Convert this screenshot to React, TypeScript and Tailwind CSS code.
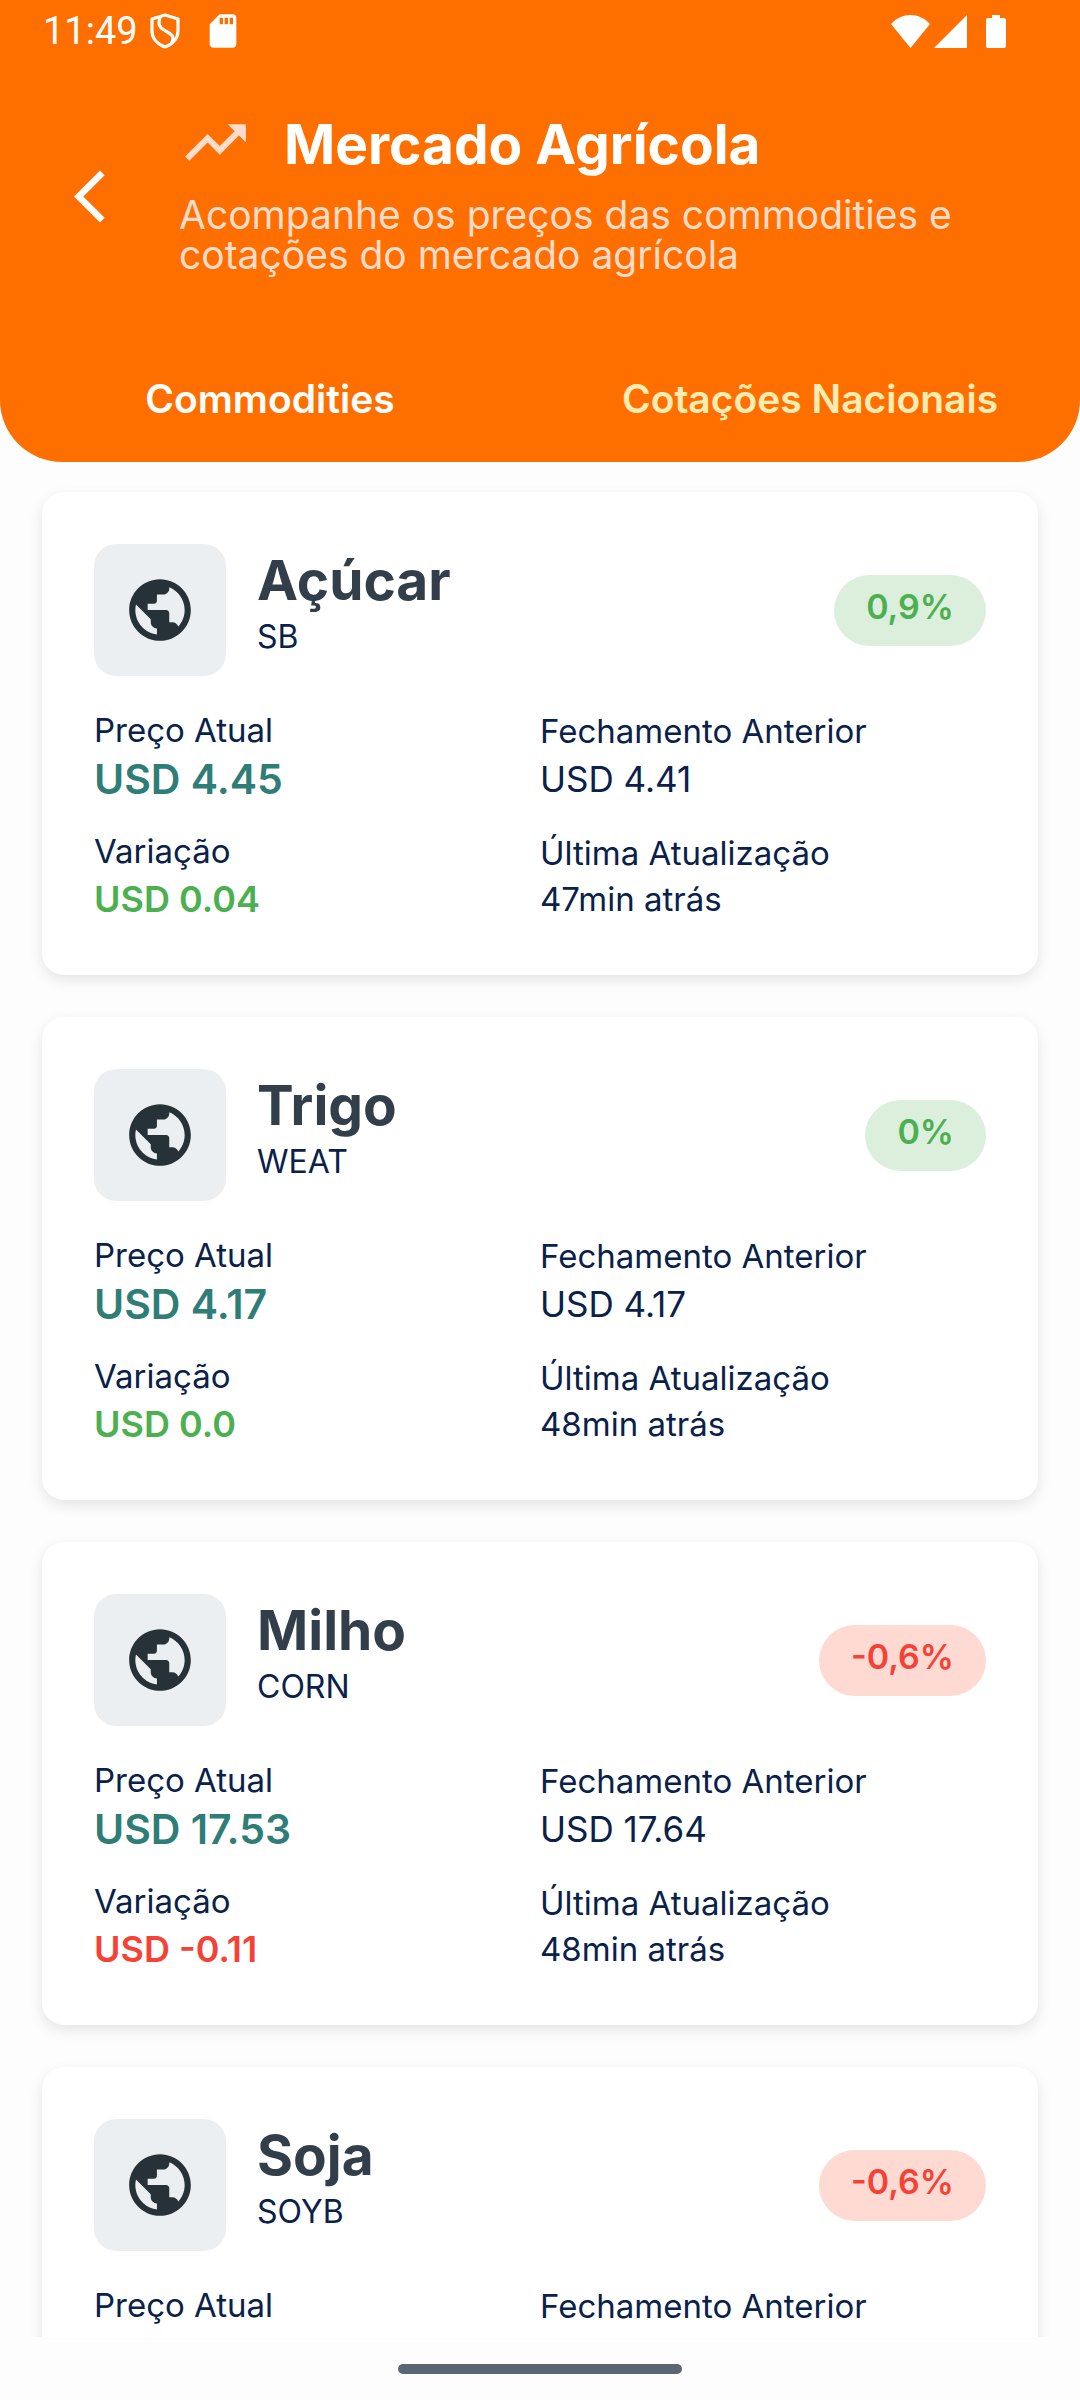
/**
 * App.tsx
 * Agricultural market screen: commodity prices and national quotes.
 */

import React from 'react'
import { MdArrowBackIos, MdPublic, MdSdStorage, MdTrendingUp } from 'react-icons/md'

type Commodity = {
  name: string
  symbol: string
  percent: string
  price: string
  previous: string
  change: string
  updated: string
  down?: boolean
}

const commodities: Commodity[] = [
  { name: 'Açúcar', symbol: 'SB', percent: '0,9%', price: 'USD 4.45', previous: 'USD 4.41', change: 'USD 0.04', updated: '47min atrás' },
  { name: 'Trigo', symbol: 'WEAT', percent: '0%', price: 'USD 4.17', previous: 'USD 4.17', change: 'USD 0.0', updated: '48min atrás' },
  { name: 'Milho', symbol: 'CORN', percent: '-0,6%', price: 'USD 17.53', previous: 'USD 17.64', change: 'USD -0.11', updated: '48min atrás', down: true },
  { name: 'Soja', symbol: 'SOYB', percent: '-0,6%', price: 'USD 22.08', previous: 'USD 22.21', change: 'USD -0.13', updated: '48min atrás', down: true },
]

function StatusBar() {
  return (
    <div className="flex h-[62px] items-center pl-[43px] pr-[74px] text-white">
      <span className="font-[Roboto,sans-serif] text-[38px] leading-[44px]">11:49</span>
      <svg className="ml-3 h-[36px] w-[30px]" viewBox="0 0 30 36" fill="none" stroke="currentColor" strokeWidth="3.200">
        <path d="M15 2 28 6v12c0 7-5 13-13 16C7 31 2 25 2 18V6z" strokeLinejoin="round" />
        <path d="M10 4c-2 7-1 10 4 13 7 4 12 6 7 14" />
      </svg>
      <MdSdStorage className="ml-[23px] size-10" />
      <svg className="ml-auto h-[33px] w-[39px]" viewBox="0 0 39 33" fill="currentColor">
        <path d="M0 9C11-3 28-3 39 9L19.500 33z" />
      </svg>
      <svg className="ml-1 size-[33px]" viewBox="0 0 33 33" fill="currentColor">
        <path d="M33 0v33H0z" />
      </svg>
      <svg className="ml-[19px] h-[33px] w-[20px]" viewBox="0 0 20 33" fill="currentColor">
        <path d="M6 0h8v3h4a2 2 0 0 1 2 2v26a2 2 0 0 1-2 2H2a2 2 0 0 1-2-2V5a2 2 0 0 1 2-2h4z" />
      </svg>
    </div>
  )
}

function Header() {
  return (
    <header className="shrink-0 rounded-b-[62px] bg-[#ff6f00]">
      <StatusBar />
      <div className="mt-11 flex items-center pl-[74px] pr-20">
        <button aria-label="Voltar" className="text-white">
          <MdArrowBackIos className="size-[63px]" />
        </button>
        <div className="ml-[42px] flex-1 pb-3">
          <div className="flex items-end gap-[32px]">
            <MdTrendingUp className="size-[73px] text-[#ffdccc]" />
            <h1 className="text-[55px] font-bold leading-[70px] text-white">Mercado Agrícola</h1>
          </div>
          <p className="mt-4 text-[39px] leading-10 text-[#ffdccc]">
            Acompanhe os preços das commodities e cotações do mercado agrícola
          </p>
        </div>
      </div>
      <nav className="mt-[49px] grid h-[126px] grid-cols-2 text-[39px] font-semibold">
        <button className="text-white">Commodities</button>
        <button className="text-[#ffecb3]">Cotações Nacionais</button>
      </nav>
    </header>
  )
}

function CommodityCard({ item }: { item: Commodity }) {
  return (
    <article className="rounded-[22px] bg-white p-[52px] shadow-[0_5px_14px_rgba(0,0,0,0.10)]">
      <div className="flex items-center">
        <div className="flex size-[132px] items-center justify-center rounded-[22px] bg-[#eceff1]">
          <MdPublic className="size-[74px] text-[#263238]" />
        </div>
        <div className="ml-[31px] flex-1">
          <h2 className="text-[55px] font-bold leading-[54px] text-[#323f4b]">{item.name}</h2>
          <p className="text-[32px] leading-[60px]">{item.symbol}</p>
        </div>
        <span
          className={
            item.down
              ? 'rounded-full bg-[#fedad3] px-8 pb-[15px] pt-2 text-[34px] font-semibold leading-[48px] text-[#f44336]'
              : 'rounded-full bg-[#dbefdc] px-8 pb-[15px] pt-2 text-[34px] font-semibold leading-[48px] text-[#4caf50]'
          }
        >
          {item.percent}
        </span>
      </div>

      <div className="mt-[30px] grid grid-cols-2 items-center gap-y-[23px] text-[33px] leading-[48px]">
        <div>
          <div>Preço Atual</div>
          <div className="text-[41px] font-semibold leading-[50px] text-[#2f7d77]">{item.price}</div>
        </div>
        <div>
          <div>Fechamento Anterior</div>
          <div className="text-[35px] leading-[48px]">{item.previous}</div>
        </div>
        <div>
          <div>Variação</div>
          <div className={item.down ? 'text-[36px] font-semibold leading-[48px] text-[#f44336]' : 'text-[36px] font-semibold leading-[48px] text-[#4caf50]'}>
            {item.change}
          </div>
        </div>
        <div>
          <div>Última Atualização</div>
          <div className="leading-[44px]">{item.updated}</div>
        </div>
      </div>
    </article>
  )
}

export default function App() {
  return (
    <div className="flex h-screen flex-col bg-[#fdfdfd] font-[Inter,sans-serif] text-[#0a2149]">
      <Header />
      <main className="min-h-0 flex-1 space-y-[42px] overflow-y-auto px-[42px] pt-[30px] [scrollbar-width:none]">
        {commodities.map((item) => (
          <CommodityCard key={item.name} item={item} />
        ))}
      </main>
      <footer className="flex h-[63px] shrink-0 items-center justify-center">
        <div className="h-[10px] w-[284px] rounded-full bg-[#5b6673]" />
      </footer>
    </div>
  )
}
